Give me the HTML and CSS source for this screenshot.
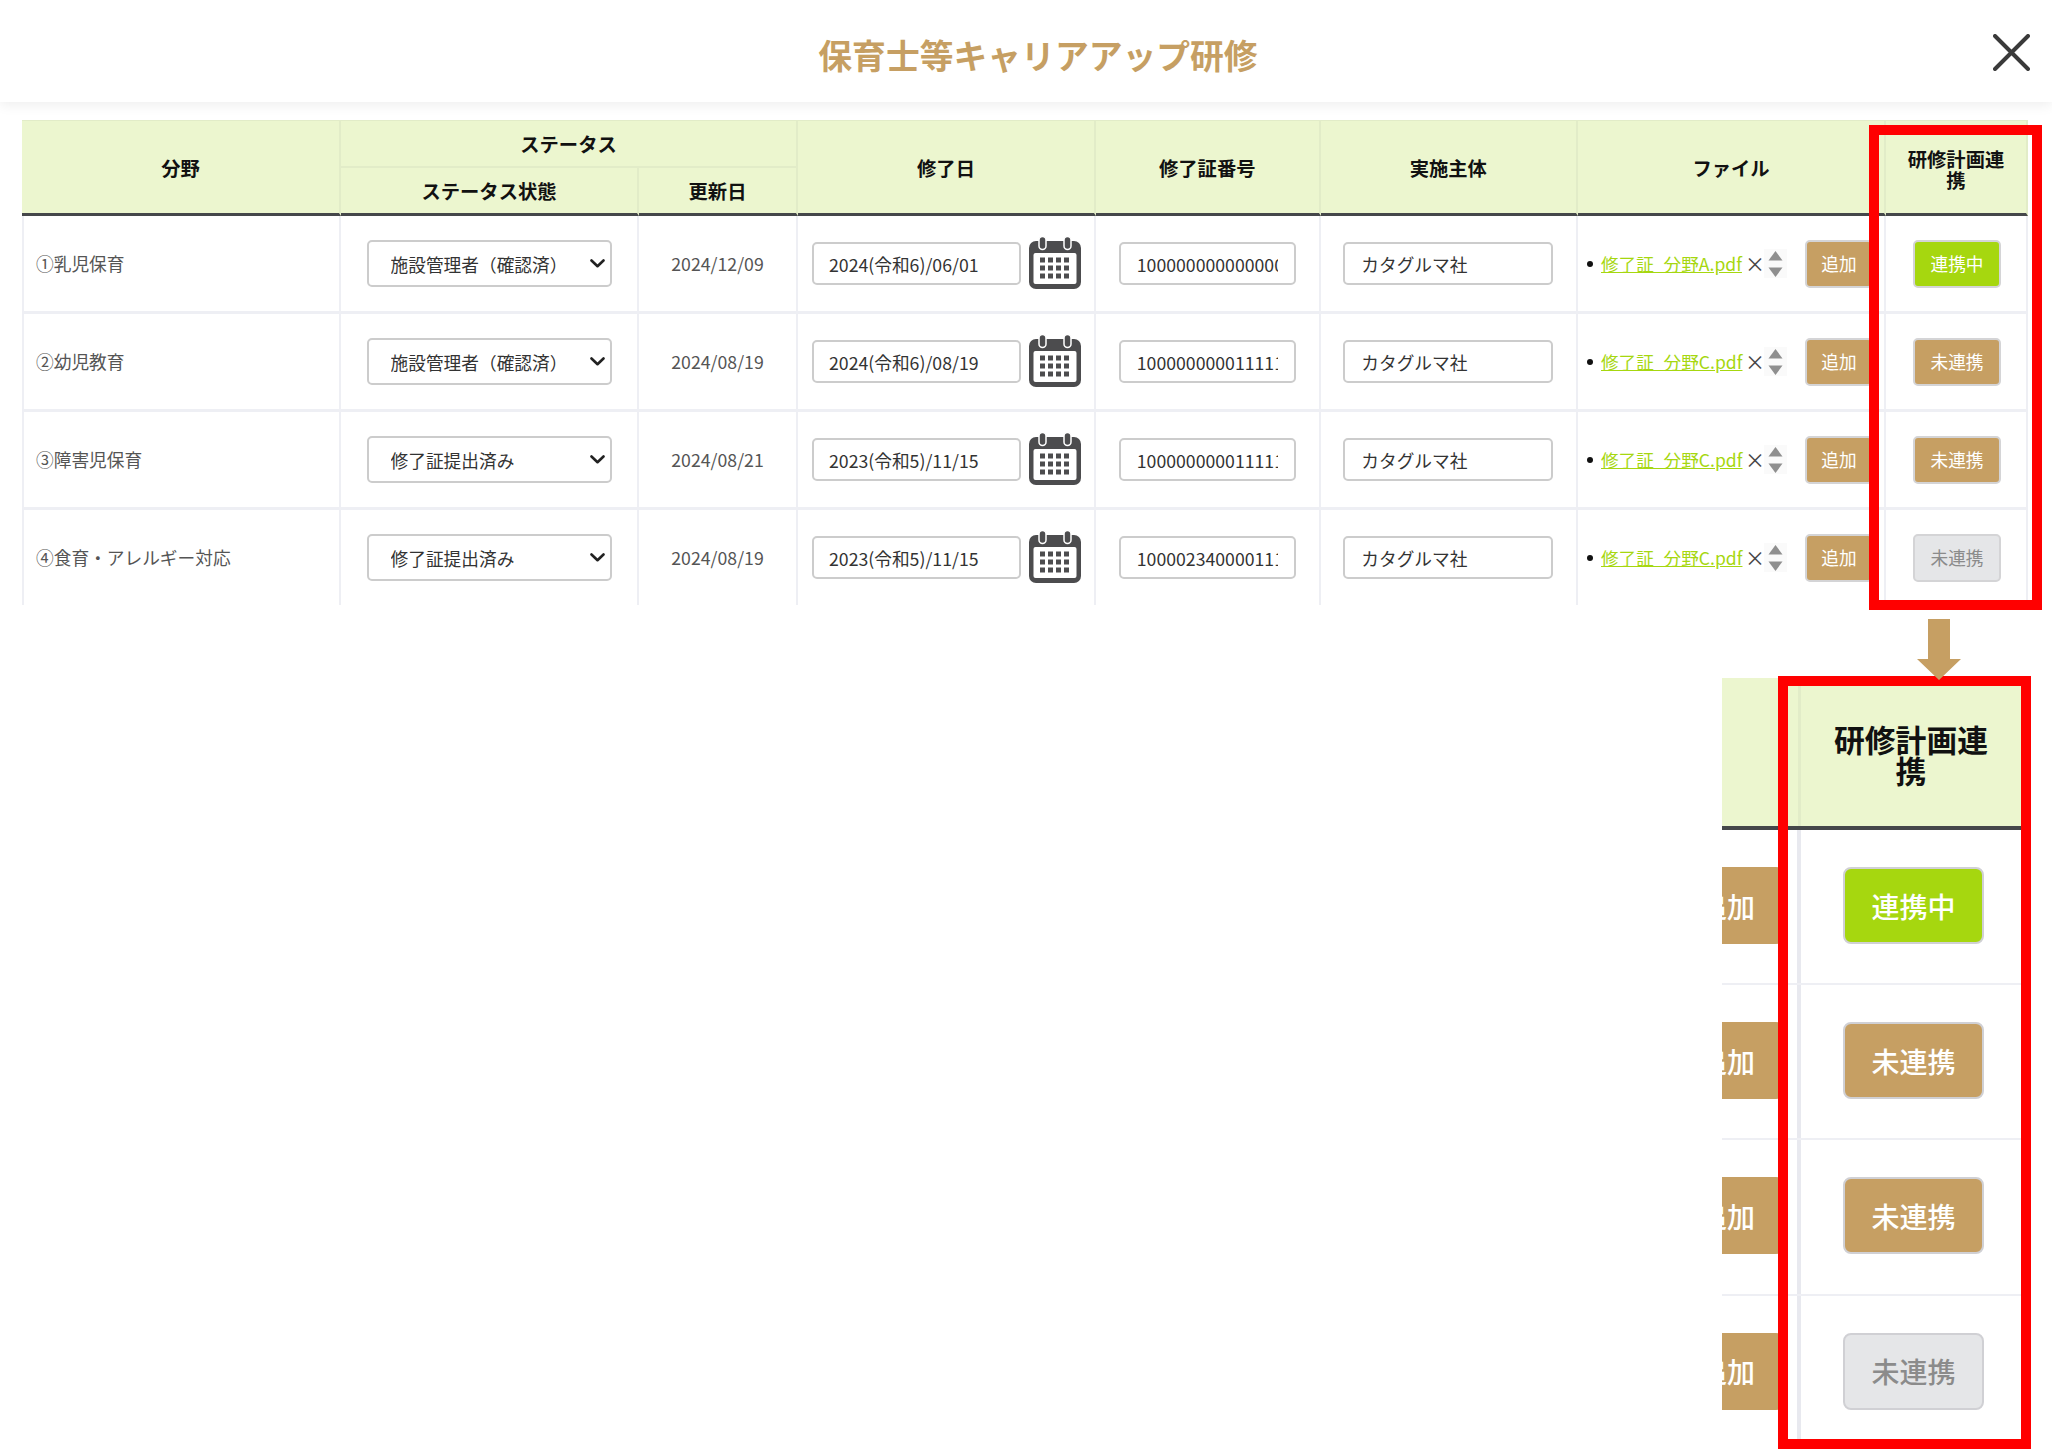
FILE: index.html
```html
<!DOCTYPE html>
<html lang="ja">
<head>
<meta charset="utf-8">
<title>保育士等キャリアアップ研修</title>
<link rel="stylesheet" href="styles.css">
</head>
<body>
<svg class="defs" width="0" height="0" aria-hidden="true">
  <symbol id="cal" viewBox="0 0 52 53">
    <rect x="0" y="5" width="52" height="48" rx="7" fill="#4c4c4e"/>
    <rect x="4.5" y="17" width="43" height="31" rx="2" fill="#fff"/>
    <rect x="10" y="0.5" width="7" height="13" rx="3.5" fill="#4c4c4e" stroke="#fff" stroke-width="1.5"/>
    <rect x="35" y="0.5" width="7" height="13" rx="3.5" fill="#4c4c4e" stroke="#fff" stroke-width="1.5"/>
    <g fill="#4c4c4e">
      <rect x="11" y="21.500" width="5" height="5"/><rect x="19" y="21.500" width="5" height="5"/><rect x="27" y="21.500" width="5" height="5"/><rect x="35" y="21.500" width="5" height="5"/>
      <rect x="11" y="29.500" width="5" height="5"/><rect x="19" y="29.500" width="5" height="5"/><rect x="27" y="29.500" width="5" height="5"/><rect x="35" y="29.500" width="5" height="5"/>
      <rect x="11" y="37.500" width="5" height="5"/><rect x="19" y="37.500" width="5" height="5"/><rect x="27" y="37.500" width="5" height="5"/><rect x="35" y="37.500" width="5" height="5"/>
    </g>
  </symbol>
  <symbol id="sort" viewBox="0 0 23 29">
    <rect width="23" height="29" fill="#fafafa"/>
    <path d="M11.500 2 L18.500 11.500 L4.500 11.500 Z" fill="#8f8f8f"/>
    <path d="M4.500 18.500 L18.500 18.500 L11.500 28 Z" fill="#8f8f8f"/>
  </symbol>
</svg>

<header class="topbar">
  <span></span>
  <h1 class="title">保育士等キャリアアップ研修</h1>
  <svg class="close" width="37" height="37" viewBox="0 0 37 37" aria-label="閉じる">
    <path d="M2 2 L35 35 M35 2 L2 35" stroke="#3a3a3a" stroke-width="4" stroke-linecap="round" fill="none"/>
  </svg>
</header>

<main class="sheet">
  <div class="table-wrap">
    <table class="grid">
      <colgroup>
        <col class="c1"><col class="c2"><col class="c3"><col class="c4"><col class="c5"><col class="c6"><col class="c7"><col class="c8">
      </colgroup>
      <thead>
        <tr class="head-a">
          <th rowspan="2" class="end first">分野</th>
          <th colspan="2" class="status">ステータス</th>
          <th rowspan="2" class="end">修了日</th>
          <th rowspan="2" class="end">修了証番号</th>
          <th rowspan="2" class="end">実施主体</th>
          <th rowspan="2" class="end">ファイル</th>
          <th rowspan="2" class="end last narrow">研修計画連携</th>
        </tr>
        <tr class="head-b">
          <th class="end">ステータス状態</th>
          <th class="end">更新日</th>
        </tr>
      </thead>
      <tbody>
        <tr>
          <td class="name first">①乳児保育</td>
          <td class="center"><select class="sel"><option>施設管理者（確認済）</option></select></td>
          <td class="center date">2024/12/09</td>
          <td><div class="date-field"><input class="field f-date" type="text" value="2024(令和6)/06/01"><svg class="cal" width="52" height="53"><use href="#cal"/></svg></div></td>
          <td class="center"><input class="field f-num" type="text" value="10000000000000000"></td>
          <td class="center"><input class="field f-org" type="text" value="カタグルマ社"></td>
          <td><div class="files"><i class="dot"></i><a class="link" href="#">修了証_分野A.pdf</a><span class="del">×</span><svg class="sort" width="23" height="29"><use href="#sort"/></svg><button class="btn tan add">追加</button></div></td>
          <td class="center last"><button class="btn green state">連携中</button></td>
        </tr>
        <tr>
          <td class="name first">②幼児教育</td>
          <td class="center"><select class="sel"><option>施設管理者（確認済）</option></select></td>
          <td class="center date">2024/08/19</td>
          <td><div class="date-field"><input class="field f-date" type="text" value="2024(令和6)/08/19"><svg class="cal" width="52" height="53"><use href="#cal"/></svg></div></td>
          <td class="center"><input class="field f-num" type="text" value="10000000001111111"></td>
          <td class="center"><input class="field f-org" type="text" value="カタグルマ社"></td>
          <td><div class="files"><i class="dot"></i><a class="link" href="#">修了証_分野C.pdf</a><span class="del">×</span><svg class="sort" width="23" height="29"><use href="#sort"/></svg><button class="btn tan add">追加</button></div></td>
          <td class="center last"><button class="btn tan state">未連携</button></td>
        </tr>
        <tr>
          <td class="name first">③障害児保育</td>
          <td class="center"><select class="sel"><option>修了証提出済み</option></select></td>
          <td class="center date">2024/08/21</td>
          <td><div class="date-field"><input class="field f-date" type="text" value="2023(令和5)/11/15"><svg class="cal" width="52" height="53"><use href="#cal"/></svg></div></td>
          <td class="center"><input class="field f-num" type="text" value="10000000001111111"></td>
          <td class="center"><input class="field f-org" type="text" value="カタグルマ社"></td>
          <td><div class="files"><i class="dot"></i><a class="link" href="#">修了証_分野C.pdf</a><span class="del">×</span><svg class="sort" width="23" height="29"><use href="#sort"/></svg><button class="btn tan add">追加</button></div></td>
          <td class="center last"><button class="btn tan state">未連携</button></td>
        </tr>
        <tr>
          <td class="name first">④食育・アレルギー対応</td>
          <td class="center"><select class="sel"><option>修了証提出済み</option></select></td>
          <td class="center date">2024/08/19</td>
          <td><div class="date-field"><input class="field f-date" type="text" value="2023(令和5)/11/15"><svg class="cal" width="52" height="53"><use href="#cal"/></svg></div></td>
          <td class="center"><input class="field f-num" type="text" value="10000234000011111"></td>
          <td class="center"><input class="field f-org" type="text" value="カタグルマ社"></td>
          <td><div class="files"><i class="dot"></i><a class="link" href="#">修了証_分野C.pdf</a><span class="del">×</span><svg class="sort" width="23" height="29"><use href="#sort"/></svg><button class="btn tan add">追加</button></div></td>
          <td class="center last"><button class="btn grey state">未連携</button></td>
        </tr>
      </tbody>
    </table>
  </div>
  <div class="redbox redbox-small"></div>

  <section class="detail">
    <div class="d-head">
      <div class="d-left"></div>
      <div class="d-title">研修計画連携</div>
    </div>
    <div class="d-row">
      <div class="d-left"><button class="big tan d-add">追加</button></div>
      <div class="d-main"><button class="big green">連携中</button></div>
    </div>
    <div class="d-row">
      <div class="d-left"><button class="big tan d-add">追加</button></div>
      <div class="d-main"><button class="big tan">未連携</button></div>
    </div>
    <div class="d-row">
      <div class="d-left"><button class="big tan d-add">追加</button></div>
      <div class="d-main"><button class="big tan">未連携</button></div>
    </div>
    <div class="d-row d-row-last">
      <div class="d-left"><button class="big tan d-add">追加</button></div>
      <div class="d-main"><button class="big grey">未連携</button></div>
    </div>
    <div class="redbox redbox-big"></div>
    <svg class="arrow" width="44" height="61" viewBox="0 0 44 61"><path d="M11 0 H33 V40 H44 L22 61 L0 40 H11 Z" fill="#c69f63"/></svg>
  </section>
</main>
</body>
</html>
```

FILE: styles.css
```css
* { box-sizing: border-box; }

html, body {
  margin: 0;
  height: 1449px;
  overflow: hidden;
  background: #fff;
}

body {
  font-family: "Noto Sans CJK JP", "Noto Sans", sans-serif;
  font-size: 17.700px;
  color: #444;
}

.defs { position: absolute; }

.topbar {
  height: 102px;
  display: grid;
  grid-template-columns: 1fr auto 1fr;
  align-items: center;
  padding: 0 22px 0 46px;
  background: #fff;
  box-shadow: 0 3px 12px rgba(0, 0, 0, .07);
  position: relative;
}

.title {
  margin: 0;
  padding-top: 7px;
  font-size: 33.800px;
  line-height: 48px;
  font-weight: 700;
  color: #c69f63;
}

.close { justify-self: end; margin-top: 3px; }

.sheet {
  position: relative;
  height: 1347px;
  padding: 18px 24px 0 22px;
}

.table-wrap { width: 2006px; height: 485px; overflow: hidden; }

.grid {
  width: 2006px;
  table-layout: fixed;
  border-collapse: separate;
  border-spacing: 0;
}

.c1 { width: 319px; }
.c2 { width: 298px; }
.c3 { width: 159px; }
.c4 { width: 298px; }
.c5 { width: 224.500px; }
.c6 { width: 257.500px; }
.c7 { width: 308px; }
.c8 { width: 142px; }

th {
  padding: 2px 0 0;
  background: #ecf6cf;
  color: #111;
  font-size: 19.300px;
  font-weight: 700;
  line-height: 21px;
  text-align: center;
  border-right: 2px solid #e2ecc8;
  border-top: 1px solid #e2ecc8;
}

.head-a th { height: 48px; }
.head-b th { height: 48px; border-top: 0; }
.status { border-bottom: 2px solid #e2ecc8; }
th.end { border-bottom: 3px solid #45474a; }
th.narrow { padding: 6px 14px 0; }
th.last { border-right: 2px solid #e2ecc8; }

td {
  height: 98px;
  padding: 0;
  border-right: 2px solid #eeeff4;
  border-bottom: 3px solid #eeeff4;
}

td.first { border-left: 2px solid #eeeff4; }
td.last { padding-left: 2px; }
.center { text-align: center; }

.name { padding: 0 0 2px 12px; color: #555; }
td.date { padding-bottom: 2px; color: #555; }

.sel {
  appearance: none;
  width: 245px;
  height: 47px;
  padding: 0 30px 0 22px;
  font: inherit;
  color: #333;
  background: #fff url("data:image/svg+xml,%3Csvg xmlns='http://www.w3.org/2000/svg' width='15' height='9' viewBox='0 0 15 9'%3E%3Cpath d='M1.500 1.500 L7.500 7.200 L13.500 1.500' fill='none' stroke='%23222' stroke-width='2.600' stroke-linecap='round' stroke-linejoin='round'/%3E%3C/svg%3E") no-repeat right 5px center;
  border: 2px solid #ccc;
  border-radius: 5px;
  vertical-align: middle;
}

.field {
  height: 43px;
  font: inherit;
  color: #333;
  background: #fff;
  border: 2px solid #ccc;
  border-radius: 5px;
  vertical-align: middle;
}

.f-date { width: 209px; padding: 0 15px; }
.f-num { width: 177px; padding: 0 16px; }
.f-org { width: 210px; padding: 0 16px; }

.date-field {
  display: flex;
  align-items: center;
  gap: 8px;
  padding-left: 14px;
}

.cal { flex: none; margin-top: -2px; }

.files {
  display: flex;
  align-items: center;
  padding-left: 9px;
}

.dot {
  flex: none;
  width: 6px;
  height: 6px;
  margin-right: 8px;
  border-radius: 50%;
  background: #111;
}

.link {
  flex: none;
  color: #a6d70f;
  text-decoration: underline;
  font-size: 17.600px;
  width: 142px;
  white-space: nowrap;
}

.del { width: 20px; margin-left: 2px; color: #444; font-size: 20px; line-height: 1; }
.sort { flex: none; margin-left: -1px; margin-right: 18px; }

.btn {
  height: 48px;
  padding: 0 0 2px;
  font: inherit;
  border-radius: 5px;
  border: 2px solid #d4d4d6;
}

.add { flex: none; width: 68px; }
.state { width: 88px; vertical-align: middle; }

.tan { background: #c69f63; color: #fff; }
.green { background: #a6d70f; color: #fff; }
.grey { background: #e5e6e8; color: #8b8b8b; }

.redbox {
  position: absolute;
  border: 10px solid #f00;
  pointer-events: none;
}

.redbox-small {
  left: 1869px;
  top: 23px;
  width: 173px;
  height: 485px;
}

/* enlarged callout of the last column */
.detail {
  position: relative;
  width: 309px;
  height: 773px;
  margin: 71px 0 0 1700px;
  padding-top: 2px;
}

.d-head {
  display: grid;
  grid-template-columns: 79px 220px;
  height: 152px;
  background: #ecf6cf;
  border-bottom: 4px solid #45474a;
}

.d-head .d-left { border-right: 3px solid #e2ecc8; }

.d-title {
  padding: 45px 30px 0;
  font-size: 30.800px;
  font-weight: 700;
  line-height: 31px;
  text-align: center;
  color: #111;
}

.d-row {
  display: grid;
  grid-template-columns: 79px 220px;
  height: 155.200px;
  border-bottom: 2.500px solid #eeeff4;
}

.d-row-last { height: 143px; border-bottom: 0; }

.d-left {
  overflow: hidden;
  border-right: 4px solid #e8e9ef;
}

.d-main { padding: 37px 0 0 42px; }

.big {
  display: block;
  width: 141px;
  height: 77px;
  padding: 0;
  font: inherit;
  font-size: 28px;
  font-weight: 500;
  border: 2px solid #d0d0d4;
  border-radius: 8px;
}

.d-add {
  width: 114px;
  margin: 37px 0 0 -52px;
  border-color: #c69f63;
}

.redbox-big {
  left: 56px;
  top: 0;
  width: 253px;
  height: 773px;
}

.arrow {
  position: absolute;
  left: 195px;
  top: -57px;
}
```
